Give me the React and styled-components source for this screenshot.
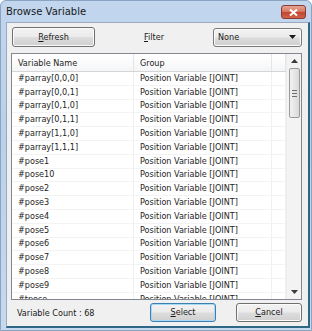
import React from "react";
import styled, { createGlobalStyle } from "styled-components";

const Global = createGlobalStyle`
  html, body { margin: 0; padding: 0; background: #fff; }
  body { font-family: "DejaVu Sans", sans-serif; }
`;

const FONT = `"DejaVu Sans Condensed", "DejaVu Sans", sans-serif`;

const Window = styled.div`
  width: 312px;
  height: 331px;
  box-sizing: border-box;
  display: flex;
  flex-direction: column;
  background: linear-gradient(180deg, #c2d6ee 0%, #b9d1ea 40%, #c6d9ef 100%);
  border: 1px solid #8aa3c0;
  border-radius: 6px 6px 0 0;
  font-family: ${FONT};
  font-stretch: condensed;
  overflow: hidden;
`;

const TitleBar = styled.div`
  height: 21px;
  flex: none;
  display: flex;
  align-items: center;
  justify-content: space-between;
  padding: 0 5px 0 5px;
`;

const Title = styled.div`
  font-family: "DejaVu Sans", sans-serif;
  font-stretch: normal;
  font-size: 10px;
  color: #1a1a1a;
`;

const CloseBtn = styled.div`
  width: 25px;
  height: 14px;
  margin-top: 1px;
  border-radius: 3px;
  border: 1px solid #8a3a32;
  background: linear-gradient(180deg, #e6a494 0%, #d77a66 45%, #c2452f 55%, #d0654d 100%);
  display: flex;
  align-items: center;
  justify-content: center;
  box-sizing: border-box;
`;

const FrameBody = styled.div`
  flex: 1;
  display: flex;
  padding: 0 4px 2px 5px;
  min-height: 0;
`;

const Client = styled.div`
  flex: 1;
  display: flex;
  flex-direction: column;
  background: #f0f0f0;
  border-left: 1px solid #9aa9bb;
  border-top: 1px solid #9aa9bb;
  border-right: 2px solid #2e6786;
  border-bottom: 2px solid #2e6786;
  padding: 4px 6px 0 4px;
  min-height: 0;
`;

const Toolbar = styled.div`
  height: 20px;
  display: flex;
  align-items: center;
  flex: none;
`;

const Button = styled.button`
  font-family: ${FONT};
  font-stretch: condensed;
  font-size: 9px;
  color: #1a1a1a;
  flex: none;
  height: ${(p) => p.$h || 20}px;
  width: ${(p) => p.$w}px;
  margin-left: ${(p) => p.$ml || 0}px;
  padding: 0;
  box-sizing: border-box;
  border: 1px solid ${(p) => (p.$default ? "#3c7fb1" : "#707070")};
  border-radius: 3px;
  background: linear-gradient(180deg, #f2f2f2 0%, #ebebeb 48%, #dddddd 52%, #cfcfcf 100%);
  box-shadow: inset 0 0 0 1px ${(p) => (p.$default ? "#a7d8f6" : "#fbfbfb")};
  display: flex;
  align-items: center;
  justify-content: center;
  line-height: 1;
  white-space: nowrap;
`;

const Caption = styled.span`
  display: inline-block;
  &::first-letter {
    text-decoration: underline;
  }
`;

const Label = styled.span`
  display: inline-block;
  font-size: 9px;
  color: #1a1a1a;
  margin-left: ${(p) => p.$ml || 0}px;
  &::first-letter {
    text-decoration: underline;
  }
`;

const Combo = styled.div`
  margin-left: auto;
  width: 89px;
  height: 19px;
  box-sizing: border-box;
  border: 1px solid #7a7a7a;
  border-radius: 3px;
  background: linear-gradient(180deg, #f2f2f2 0%, #ebebeb 48%, #dddddd 52%, #cfcfcf 100%);
  box-shadow: inset 0 0 0 1px #fbfbfb;
  display: flex;
  align-items: center;
  justify-content: space-between;
  padding: 0 5px 0 4px;
  font-size: 9px;
  color: #1a1a1a;
`;

const ListBox = styled.div`
  margin-top: 6px;
  height: 247px;
  flex: none;
  box-sizing: border-box;
  border: 1px solid #828790;
  background: #fff;
  display: flex;
  overflow: hidden;
`;

const Grid = styled.div`
  flex: 1;
  display: flex;
  flex-direction: column;
  overflow: hidden;
  min-width: 0;
`;

const HeaderRow = styled.div`
  height: 18px;
  flex: none;
  display: grid;
  grid-template-columns: 122px 138px 1fr;
  background: linear-gradient(180deg, #ffffff 0%, #fbfbfb 50%, #f4f5f7 100%);
  border-bottom: 1px solid #d5d5d5;
  box-sizing: border-box;
`;

const HeaderCell = styled.div`
  font-size: 9px;
  color: #1e1e1e;
  padding-left: 6px;
  display: flex;
  align-items: center;
  border-right: 1px solid #e3e5e8;
  white-space: nowrap;
  overflow: hidden;
`;

const Row = styled.div`
  height: 13.8px;
  flex: none;
  display: grid;
  grid-template-columns: 122px 138px 1fr;
  box-sizing: border-box;
  border-bottom: 1px solid #f3f3f3;
`;

const Cell = styled.div`
  font-size: 9px;
  color: #1e1e1e;
  padding-left: 6px;
  display: flex;
  align-items: center;
  border-right: 1px solid #f0f0f0;
  white-space: nowrap;
  overflow: hidden;
  line-height: 1;
`;

const ScrollBar = styled.div`
  width: 15px;
  flex: none;
  background: #f3f3f3;
  border-left: 1px solid #ececec;
  display: flex;
  flex-direction: column;
  align-items: center;
  box-sizing: border-box;
`;

const Arrow = styled.div`
  height: 14px;
  width: 100%;
  display: flex;
  align-items: center;
  justify-content: center;
  flex: none;
`;

const Thumb = styled.div`
  width: 11px;
  height: 50px;
  box-sizing: border-box;
  border: 1px solid #9a9a9a;
  border-radius: 2px;
  background: linear-gradient(90deg, #f1f1f1 0%, #e6e6e6 50%, #d9d9d9 100%);
  display: flex;
  flex-direction: column;
  align-items: center;
  justify-content: center;
  gap: 2px;
`;

const Grip = styled.div`
  width: 5px;
  height: 1px;
  background: #6e6e6e;
`;

const Track = styled.div`
  flex: 1;
`;

const Footer = styled.div`
  flex: 1;
  display: flex;
  align-items: center;
  padding-left: 6px;
  padding-bottom: 1px;
`;

const Count = styled.span`
  font-size: 9px;
  line-height: 12px;
  color: #1a1a1a;
  white-space: nowrap;
  flex: none;
  width: 133px;
`;

const rows = [
  "#parray[0,0,0]",
  "#parray[0,0,1]",
  "#parray[0,1,0]",
  "#parray[0,1,1]",
  "#parray[1,1,0]",
  "#parray[1,1,1]",
  "#pose1",
  "#pose10",
  "#pose2",
  "#pose3",
  "#pose4",
  "#pose5",
  "#pose6",
  "#pose7",
  "#pose8",
  "#pose9",
  "#tpose",
];

export default function App() {
  return (
    <>
      <Global />
      <Window>
        <TitleBar>
          <Title>Browse Variable</Title>
          <CloseBtn>
            <svg width="9" height="7" viewBox="0 0 9 7">
              <path d="M1 0.5 L8 6.5 M8 0.5 L1 6.5" stroke="#fff" strokeWidth="2" />
            </svg>
          </CloseBtn>
        </TitleBar>
        <FrameBody>
          <Client>
            <Toolbar>
              <Button $w={83} $ml={1}>
                <Caption>Refresh</Caption>
              </Button>
              <Label $ml={49}>Filter</Label>
              <Combo>
                <span>None</span>
                <svg width="7" height="4" viewBox="0 0 7 4">
                  <path d="M0 0 H7 L3.5 4 Z" fill="#1a1a1a" />
                </svg>
              </Combo>
            </Toolbar>
            <ListBox>
              <Grid>
                <HeaderRow>
                  <HeaderCell>Variable Name</HeaderCell>
                  <HeaderCell>Group</HeaderCell>
                  <HeaderCell />
                </HeaderRow>
                {rows.map((r) => (
                  <Row key={r}>
                    <Cell>{r}</Cell>
                    <Cell>Position Variable [JOINT]</Cell>
                    <Cell />
                  </Row>
                ))}
              </Grid>
              <ScrollBar>
                <Arrow>
                  <svg width="7" height="4" viewBox="0 0 7 4">
                    <path d="M0 4 H7 L3.5 0 Z" fill="#3a3a3a" />
                  </svg>
                </Arrow>
                <Thumb>
                  <Grip />
                  <Grip />
                  <Grip />
                </Thumb>
                <Track />
                <Arrow>
                  <svg width="7" height="4" viewBox="0 0 7 4">
                    <path d="M0 0 H7 L3.5 4 Z" fill="#3a3a3a" />
                  </svg>
                </Arrow>
              </ScrollBar>
            </ListBox>
            <Footer>
              <Count>Variable Count : 68</Count>
              <Button $w={66} $h={19} $default>
                <Caption>Select</Caption>
              </Button>
              <Button $w={66} $h={19} $ml={20}>
                <Caption>Cancel</Caption>
              </Button>
            </Footer>
          </Client>
        </FrameBody>
      </Window>
    </>
  );
}
